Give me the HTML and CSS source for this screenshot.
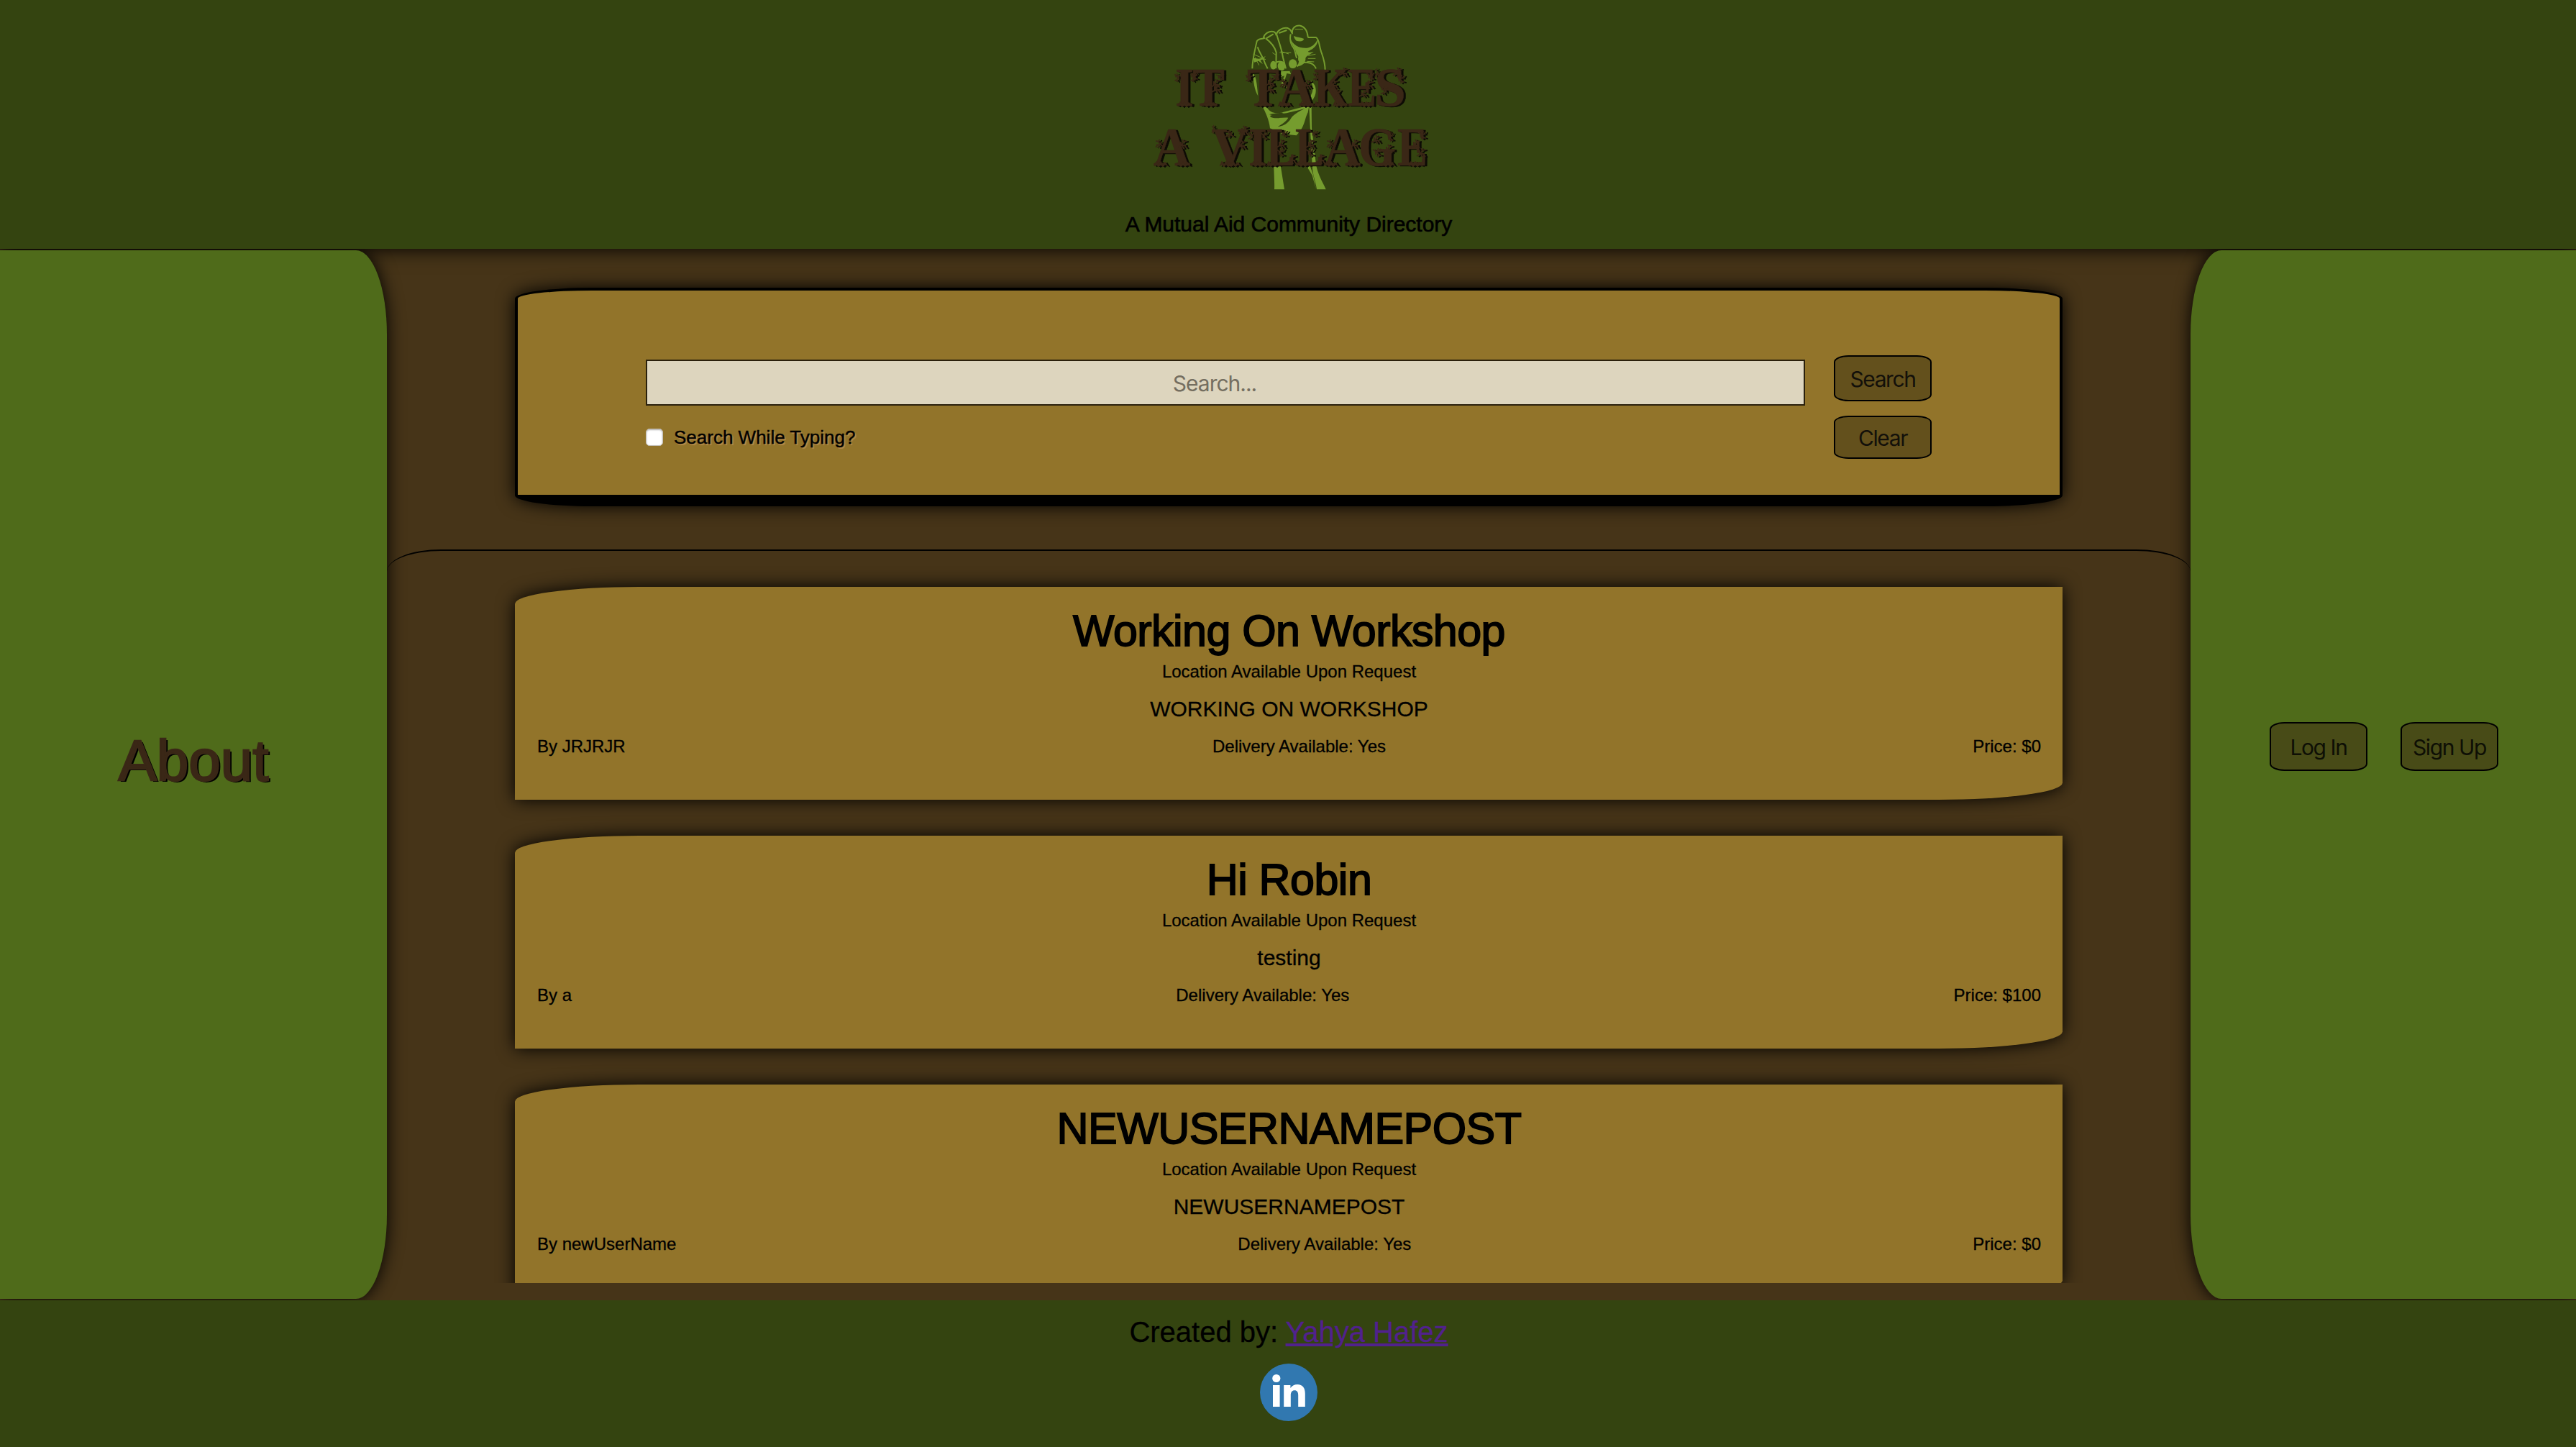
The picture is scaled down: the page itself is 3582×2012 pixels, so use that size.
FILE: index.html
```html
<!DOCTYPE html>
<html lang="en">
<head>
<meta charset="utf-8">
<title>It Takes A Village</title>
<link rel="stylesheet" href="styles.css">
</head>
<body>
<header class="header">
  <svg class="logo" viewBox="1596 24 390 250" role="img" aria-label="It Takes A Village">
    <defs>
      <g id="twig" fill="none" stroke-width="2">
        <path d="M0 0L5 -3L8 -8M5 -3L11 -3M8 -8L6 -11M8 -8L12 -9M9 -3L12 1M4 -2L4 -8M6 -3L8 2"/>
      </g>
      <g id="roots"><path d="M-9 0l3 -7 3 4 3 -4 3 5 3 -4 4 6 -4 -2 -3 3 -3 -3 -3 3 -3 -3z"/></g>
      <g id="lettering">
        <g class="logo-letters">
          <text x="1634" y="147" textLength="26" lengthAdjust="spacingAndGlyphs">I</text>
          <text x="1658" y="147" textLength="45" lengthAdjust="spacingAndGlyphs">T</text>
          <text x="1734" y="147" textLength="45" lengthAdjust="spacingAndGlyphs">T</text>
          <text x="1778" y="147" textLength="49" lengthAdjust="spacingAndGlyphs">A</text>
          <text x="1827" y="147" textLength="47" lengthAdjust="spacingAndGlyphs">K</text>
          <text x="1874" y="147" textLength="40" lengthAdjust="spacingAndGlyphs">E</text>
          <text x="1911" y="147" textLength="44" lengthAdjust="spacingAndGlyphs">S</text>
          <text x="1604" y="230" textLength="51" lengthAdjust="spacingAndGlyphs">A</text>
          <text x="1685" y="230" textLength="51" lengthAdjust="spacingAndGlyphs">V</text>
          <text x="1736" y="230" textLength="26" lengthAdjust="spacingAndGlyphs">I</text>
          <text x="1761" y="230" textLength="40" lengthAdjust="spacingAndGlyphs">L</text>
          <text x="1801" y="230" textLength="40" lengthAdjust="spacingAndGlyphs">L</text>
          <text x="1841" y="230" textLength="51" lengthAdjust="spacingAndGlyphs">A</text>
          <text x="1889" y="230" textLength="52" lengthAdjust="spacingAndGlyphs">G</text>
          <text x="1943" y="230" textLength="42" lengthAdjust="spacingAndGlyphs">E</text>
        </g>
        <use href="#twig" x="1685" y="128"/><use href="#twig" x="1760" y="128"/>
        <use href="#twig" x="1684" y="121"/><use href="#twig" x="1760" y="119"/>
        <use href="#twig" transform="translate(1642 104) scale(-.7 -.9)"/>
        <use href="#twig" transform="translate(1664 104) scale(-.7 -.9)"/>
        <use href="#twig" transform="translate(1656 102) scale(.8 -.9)"/>
        <use href="#twig" transform="translate(1691 104) scale(.9 -.7)"/>
        <use href="#twig" transform="translate(1742 105) scale(-.8 -.8)"/>
        <use href="#twig" transform="translate(1768 104) scale(.9 -.7)"/>
        <use href="#twig" transform="translate(1791 120) scale(-.9 .9)"/>
        <use href="#twig" transform="translate(1811 122)"/>
        <use href="#twig" transform="translate(1836 103) scale(-.8 -.8)"/>
        <use href="#twig" x="1848" y="122"/><use href="#twig" x="1862" y="105"/>
        <use href="#twig" transform="translate(1852 126) scale(1 -.9)"/>
        <use href="#twig" transform="translate(1895 122) scale(1.2 .9)"/>
        <use href="#twig" transform="translate(1900 102) scale(.9 -.9)"/>
        <use href="#twig" transform="translate(1890 134) scale(.9 .8)"/>
        <use href="#twig" transform="translate(1918 106) scale(-.5 1)"/>
        <use href="#twig" x="1937" y="105"/>
        <use href="#twig" transform="translate(1942 106) scale(.9 -.9)"/>
        <use href="#twig" transform="translate(1931 122) scale(-.9 -.9)"/>
        <use href="#twig" transform="translate(1618 204) scale(-.9 .9)"/>
        <use href="#twig" x="1638" y="205"/>
        <use href="#twig" transform="translate(1691 184) scale(-.5 .9)"/>
        <use href="#twig" transform="translate(1716 190) scale(-1 .8)"/>
        <use href="#twig" x="1720" y="206"/><use href="#twig" x="1723" y="186"/>
        <use href="#twig" transform="translate(1744 185) scale(-.7 -.9)"/>
        <use href="#twig" transform="translate(1753 185) scale(.8 -.9)"/>
        <use href="#twig" transform="translate(1780 183) scale(.9 -.7)"/>
        <use href="#twig" x="1775" y="205"/><use href="#twig" transform="translate(1775 208) scale(.9 -.9)"/>
        <use href="#twig" transform="translate(1822 183) scale(.9 -.7)"/>
        <use href="#twig" x="1816" y="205"/><use href="#twig" transform="translate(1816 208) scale(.9 -.9)"/>
        <use href="#twig" x="1790" y="226"/><use href="#twig" x="1830" y="226"/>
        <use href="#twig" transform="translate(1856 204) scale(-.9 .9)"/>
        <use href="#twig" x="1877" y="205"/>
        <use href="#twig" transform="translate(1907 198) scale(1 .9)"/>
        <use href="#twig" transform="translate(1909 208) scale(1 -.9)"/>
        <use href="#twig" x="1924" y="212"/>
        <use href="#twig" transform="translate(1929 186) scale(.7 -1)"/>
        <use href="#twig" x="1962" y="205"/>
        <use href="#twig" transform="translate(1972 184) scale(.9 -.9)"/>
        <use href="#twig" x="1970" y="217"/>
        <use href="#roots" x="1647" y="148"/><use href="#roots" x="1681" y="148"/><use href="#roots" x="1756" y="148"/>
        <use href="#roots" x="1786" y="148"/><use href="#roots" x="1816" y="148"/><use href="#roots" x="1836" y="148"/>
        <use href="#roots" x="1862" y="148"/><use href="#roots" x="1900" y="148"/>
        <use href="#roots" x="1614" y="231"/><use href="#roots" x="1645" y="231"/><use href="#roots" x="1705" y="231"/>
        <use href="#roots" x="1715" y="231"/><use href="#roots" x="1749" y="231"/><use href="#roots" x="1770" y="231"/>
        <use href="#roots" x="1812" y="231"/><use href="#roots" x="1851" y="231"/><use href="#roots" x="1881" y="231"/>
        <use href="#roots" x="1930" y="231"/><use href="#roots" x="1968" y="231"/>
      </g>
    </defs>
    <g class="fist" transform="translate(1730 30) scale(.33333)">
      <path class="line" d="M34 196C34 160 46 115 53 82C62 68 78 74 88 68M80 70C84 50 105 38 122 42C130 44 133 50 134 58M135 52C140 36 160 24 181 27C192 31 197 40 199 48M201 52C198 28 212 15 234 17C254 22 264 42 266 64M265 66L300 66C314 74 311 95 321 125C330 150 338 168 338 205"/>
      <path class="line" d="M90 70C112 86 127 104 134 128L133 195M56 106C66 138 78 142 88 176L98 196M136 54C142 80 155 104 162 150L172 188M194 52C189 78 196 96 205 108C217 124 212 140 220 152M132 172C150 160 170 170 174 196M220 186C244 164 288 164 300 196M92 70L122 52M145 48L178 36"/>
      <path class="thin" d="M38 136L90 158M52 158H86M148 130H196M152 124L186 135M118 130L134 140M268 142L298 136M266 154H298M262 166L292 168M212 32H246M46 150L62 182M88 146L64 160"/>
      <path d="M192 68C204 100 232 112 262 110C280 108 298 96 308 70C308 108 280 116 266 126C272 130 282 128 290 126C276 138 258 142 256 154C258 170 244 184 228 186L219 190C232 170 232 148 217 133C218 118 194 92 192 68ZM207 60C222 66 236 66 250 72C246 84 232 84 218 80C212 76 208 66 207 60ZM38 152L62 155L88 147L68 162L78 178L60 164L42 170Z"/>
      <ellipse cx="122" cy="182" rx="13" ry="18"/><ellipse cx="156" cy="185" rx="16" ry="20"/>
      <ellipse cx="203" cy="176" rx="17" ry="19"/><ellipse cx="240" cy="156" rx="15" ry="17"/>
      <path d="M34 215C50 220 54 262 58 310C42 284 40 250 34 215ZM275 244C306 266 306 302 282 332L240 340C284 318 298 284 275 244ZM138 208L190 206L196 220L178 216L166 256L190 284L154 262L168 226L150 232Z"/>
    </g>
    <g class="fist" transform="translate(1730 145) scale(.33333)">
      <path d="M74 4L92 8C106 34 124 38 150 36L250 10L270 12L266 34C252 60 254 96 218 130L160 124L108 100C104 64 90 36 74 4Z"/>
      <path class="shade" d="M104 42C124 36 144 38 160 34C156 44 190 34 252 18C220 34 204 46 196 58C184 80 162 92 140 94C156 84 176 72 184 56C160 54 130 62 112 54C106 50 108 46 118 46Z"/>
      <path d="M122 100H136V196L152 255L168 355H126C128 310 120 240 122 100ZM248 110H260V214L288 294L300 355L284 296L250 240ZM271 10H281L282 98L300 252C310 300 330 328 341 355H303C298 320 284 290 284 252L276 110Z"/>
    </g>
    <g class="letter-shadow" transform="translate(3 1)"><use href="#lettering"/></g>
    <g class="letter-face"><use href="#lettering"/></g>
  </svg>
  <p class="tagline">A Mutual Aid Community Directory</p>
</header>

<main class="main">
  <aside class="panel panel-left"><h2 class="about">About</h2></aside>

  <section class="content">
    <form class="search-card">
      <div class="search-fields">
        <input class="search-input" type="text" placeholder="Search...">
        <label class="typing"><input class="checkbox" type="checkbox"><span>Search While Typing?</span></label>
      </div>
      <div class="search-actions">
        <button class="btn btn-search" type="button">Search</button>
        <button class="btn btn-clear" type="button">Clear</button>
      </div>
    </form>

    <div class="posts">
      <article class="post">
        <h2 class="post-title">Working On Workshop</h2>
        <p class="post-location">Location Available Upon Request</p>
        <p class="post-body">WORKING ON WORKSHOP</p>
        <div class="post-meta"><span>By JRJRJR</span><span>Delivery Available: Yes</span><span>Price: $0</span></div>
      </article>
      <article class="post">
        <h2 class="post-title">Hi Robin</h2>
        <p class="post-location">Location Available Upon Request</p>
        <p class="post-body">testing</p>
        <div class="post-meta"><span>By a</span><span>Delivery Available: Yes</span><span>Price: $100</span></div>
      </article>
      <article class="post">
        <h2 class="post-title">NEWUSERNAMEPOST</h2>
        <p class="post-location">Location Available Upon Request</p>
        <p class="post-body">NEWUSERNAMEPOST</p>
        <div class="post-meta"><span>By newUserName</span><span>Delivery Available: Yes</span><span>Price: $0</span></div>
      </article>
    </div>
  </section>

  <aside class="panel panel-right">
    <button class="btn btn-auth" type="button">Log In</button>
    <button class="btn btn-auth" type="button">Sign Up</button>
  </aside>
</main>

<footer class="footer">
  <p class="credit">Created by: <a class="credit-link" href="#">Yahya Hafez</a></p>
  <svg class="linkedin" viewBox="0 0 80 80" role="img" aria-label="LinkedIn">
    <circle cx="40" cy="40" r="40" fill="#3178b0"/>
    <g fill="#fff">
      <circle cx="22.8" cy="20.5" r="5.6"/>
      <path d="M18 30H27.6V60H18ZM33.2 30H42.4V34C45 30.6 48 29 52 29C59.4 29 62.8 33.8 62.8 42V60H53.2V44C53.2 39.4 51.6 37.2 48.2 37.2C44.6 37.2 42.8 39.6 42.8 44V60H33.2Z"/>
    </g>
  </svg>
</footer>
</body>
</html>
```
FILE: styles.css
```css
* { box-sizing: border-box; }
h2, p { margin: 0; font-weight: 400; }

body {
  margin: 0;
  width: 3582px;
  height: 2012px;
  overflow: hidden;
  display: flex;
  flex-direction: column;
  background: #463418;
  color: #000;
  font-family: "Liberation Sans", Arial, sans-serif;
}

.header {
  height: 346px;
  flex: none;
  padding-top: 24px;
  display: flex;
  flex-direction: column;
  align-items: center;
  background: #344410;
  box-shadow: 0 0 25px #000;
}
.logo { width: 390px; height: 250px; display: block; }
.logo-letters { font: bold 77px "Liberation Serif", "Times New Roman", serif; }
.letter-shadow { fill: #0d0b05; stroke: #0d0b05; stroke-width: .5; }
.letter-face { fill: #3a2716; stroke: #3a2716; stroke-width: .5; }
.fist { fill: #759c2e; }
.fist .line { fill: none; stroke: #759c2e; stroke-width: 6; }
.fist .thin { fill: none; stroke: #759c2e; stroke-width: 3; }
.fist .shade { fill: #344410; }
.tagline {
  margin-top: 18px;
  padding-left: 2px;
  font-size: 30px;
  line-height: 40px;
  letter-spacing: -.02px;
  -webkit-text-stroke: .6px #000;
}

/* Clipped so that the side panels cast no shadow on the header and footer. */
.main { height: 1462px; flex: none; display: flex; clip-path: inset(0); }
.panel {
  flex: none;
  margin: 2px 0;
  display: flex;
  align-items: center;
  justify-content: center;
  background: #4f6b1a;
  box-shadow: 0 0 25px #000;
}
.panel-left { width: 538px; padding-bottom: 38px; border-radius: 0 8% 8% 0; }
.panel-right { width: 536px; padding: 0 0 78px 2px; gap: 46px; border-radius: 8% 0 0 8%; }
.about {
  font-size: 80px;
  line-height: 90px;
  color: #3a2716;
  -webkit-text-stroke: 2.4px #3a2716;
  text-shadow: 3px 2px 0 #000;
}

.content { width: 2508px; flex: none; }
.search-card {
  width: 2152px;
  height: 304px;
  margin: 54px auto 60px 178px;
  padding: 90px 178px 0;
  display: flex;
  gap: 40px;
  background: #92742a;
  border: 4px solid #000;
  border-bottom-width: 16px;
  border-radius: 5%;
  box-shadow: 0 0 25px #000;
}
.search-fields { width: 1612px; padding-top: 6px; }
.search-input {
  display: block;
  width: 100%;
  height: 64px;
  padding: 2px 58px 0 28px;
  border: 2px solid #2a200c;
  background: #ddd5be;
  text-align: center;
  font: 30px Inter, sans-serif;
  letter-spacing: -1px;
}
.search-input::placeholder { color: #746e60; opacity: 1; }
.typing {
  margin-top: 28px;
  display: flex;
  align-items: center;
  gap: 15px;
  font-size: 26px;
  line-height: 32px;
  -webkit-text-stroke: .4px #000;
  text-shadow: 2px 2px 1px #b48a4c;
}
.checkbox {
  appearance: none;
  width: 24px;
  height: 24px;
  margin: 0;
  background: #fff;
  border: 1px solid #c4c0b8;
  border-radius: 5px;
  box-shadow: inset 0 1px 2px #aaa;
}
.search-actions { display: flex; flex-direction: column; gap: 20px; }
.btn {
  width: 136px;
  padding: 0;
  border: 2px solid #000;
  border-radius: 15%;
  background: #63501c;
  color: #13100a;
  font: 30px Inter, sans-serif;
  letter-spacing: -1.4px;
  text-align: center;
}
.btn-search { height: 64px; padding-top: 2px; }
.btn-clear { height: 60px; padding-top: 2px; }
.btn-auth { height: 68px; padding-top: 2px; background: #484b17; color: #0e0f05; }

.posts {
  height: 1020px;
  padding-top: 50px;
  overflow: hidden;
  border-top: 2px solid #000;
  border-radius: 3% 3% 0 0;
}
.post {
  width: 2152px;
  height: 296px;
  margin: 0 auto 50px 178px;
  padding: 29px 30px 0 31px;
  background: #92742a;
  border-radius: 8% 0;
  box-shadow: 0 0 25px #000;
  text-align: center;
}
.post-title { font-size: 61px; line-height: 64px; letter-spacing: -.55px; -webkit-text-stroke: 1.8px #000; }
.post-location { margin-top: 12px; font-size: 24px; line-height: 26px; }
.post-body { margin-top: 22px; font-size: 30px; line-height: 34px; -webkit-text-stroke: .3px #000; }
.post-meta { margin-top: 22px; display: flex; justify-content: space-between; font-size: 24px; line-height: 26px; }
.post-location, .post-meta { -webkit-text-stroke: .3px #000; }

.footer {
  height: 204px;
  flex: none;
  padding: 21px 0 0 2px;
  display: flex;
  flex-direction: column;
  align-items: center;
  gap: 21px;
  background: #344410;
}
.credit { font-size: 40px; line-height: 46px; -webkit-text-stroke: .3px; }
.credit-link { color: #51218d; text-decoration-thickness: 4px; text-underline-offset: 2px; }
.linkedin { width: 80px; height: 80px; display: block; }
```
